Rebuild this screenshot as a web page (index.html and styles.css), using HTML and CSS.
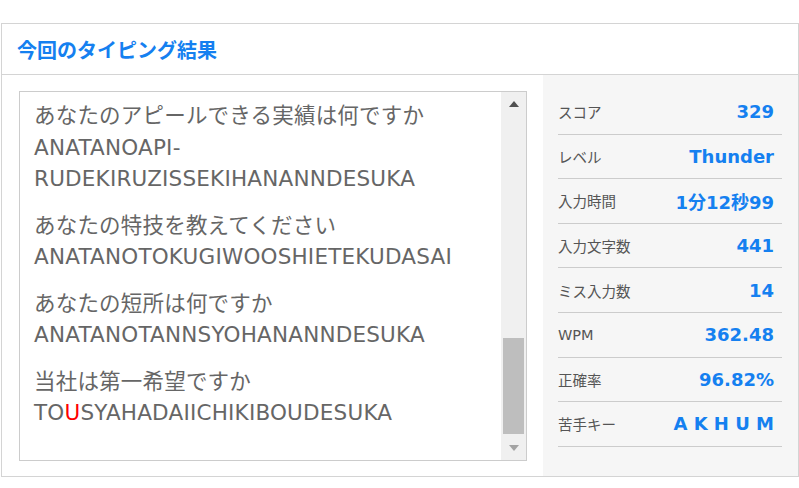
FILE: index.html
```html
<!DOCTYPE html>
<html lang="ja">
<head>
  <meta charset="UTF-8">
  <meta name="viewport" content="width=device-width, initial-scale=1.0">
  <title>タイピング結果</title>
  <link rel="stylesheet" href="styles.css">
</head>
<body>
  <div class="result-card">
    <div class="card-header">今回のタイピング結果</div>
    <div class="card-body">
      <div class="log-area">
        <div class="log-box">
          <div class="log-text">
            <div class="entry">
              <div>あなたのアピールできる実績は何ですか</div>
              <div>ANATANOAPI-RUDEKIRUZISSEKIHANANNDESUKA</div>
            </div>
            <div class="entry">
              <div>あなたの特技を教えてください</div>
              <div>ANATANOTOKUGIWOOSHIETEKUDASAI</div>
            </div>
            <div class="entry">
              <div>あなたの短所は何ですか</div>
              <div>ANATANOTANNSYOHANANNDESUKA</div>
            </div>
            <div class="entry">
              <div>当社は第一希望ですか</div>
              <div>TO<span class="miss">U</span>SYAHADAIICHIKIBOUDESUKA</div>
            </div>
          </div>
          <!-- fake scrollbar, scrolled to the bottom -->
          <div class="scrollbar">
            <div class="scroll-btn"><span class="arrow-up"></span></div>
            <div class="scroll-track"><div class="scroll-thumb"></div></div>
            <div class="scroll-btn"><span class="arrow-down"></span></div>
          </div>
        </div>
      </div>
      <div class="stats">
        <div class="stat-row"><span class="stat-label">スコア</span><span class="stat-value">329</span></div>
        <div class="stat-row"><span class="stat-label">レベル</span><span class="stat-value">Thunder</span></div>
        <div class="stat-row"><span class="stat-label">入力時間</span><span class="stat-value">1分12秒99</span></div>
        <div class="stat-row"><span class="stat-label">入力文字数</span><span class="stat-value">441</span></div>
        <div class="stat-row"><span class="stat-label">ミス入力数</span><span class="stat-value">14</span></div>
        <div class="stat-row"><span class="stat-label">WPM</span><span class="stat-value">362.48</span></div>
        <div class="stat-row"><span class="stat-label">正確率</span><span class="stat-value">96.82%</span></div>
        <div class="stat-row"><span class="stat-label">苦手キー</span><span class="stat-value">A K H U M</span></div>
      </div>
    </div>
  </div>
</body>
</html>
```

FILE: styles.css
```css
body {
  margin: 0;
  background-color: #fff;
  font-family: "DejaVu Sans", "Noto Sans CJK JP", sans-serif;
}

/* Card */
.result-card {
  width: 798px;
  margin: 23px 0 0 1px;
  border: 1px solid #d4d4d4;
  box-sizing: border-box;
}
.card-header {
  height: 51px;
  padding: 0 15px;
  border-bottom: 1px solid #d4d4d4;
  box-sizing: border-box;
  display: flex;
  align-items: center;
  color: #1580f0;
  font-size: 20px;
  font-weight: bold;
}
.card-body {
  display: flex;
  height: 401px;
}

/* Typed text log */
.log-area {
  flex: 1;
  padding: 16px 16px 15px 17px;
}
.log-box {
  height: 100%;
  border: 1px solid #cccccc;
  box-sizing: border-box;
  display: flex;
}
.log-text {
  flex: 1;
  padding: 8px 14px;
  overflow: hidden;
  color: #666;
  font-size: 21.5px;
  line-height: 31.5px;
  letter-spacing: 0.2px;
}
.entry + .entry {
  margin-top: 15px;
}
.miss {
  color: #ff0000;
}

/* Scrollbar */
.scrollbar {
  width: 25px;
  background-color: #f0f0f0;
  display: flex;
  flex-direction: column;
}
.scroll-btn {
  height: 24px;
  display: flex;
  align-items: center;
  justify-content: center;
}
.scroll-track {
  flex: 1;
  display: flex;
  flex-direction: column;
  justify-content: flex-end;
  padding: 0 2px 2px 2px;
}
.scroll-thumb {
  height: 96px;
  background-color: #bebebe;
}
.arrow-up {
  width: 0;
  height: 0;
  border-left: 5.5px solid transparent;
  border-right: 5.5px solid transparent;
  border-bottom: 6px solid #505050;
}
.arrow-down {
  width: 0;
  height: 0;
  border-left: 5.5px solid transparent;
  border-right: 5.5px solid transparent;
  border-top: 6px solid #a3a3a3;
}

/* Stats panel */
.stats {
  width: 255px;
  padding: 15px 16px 0 15px;
  box-sizing: border-box;
  background-color: #f6f6f6;
}
.stat-row {
  height: 44.6px;
  border-bottom: 1px solid #cccccc;
  box-sizing: border-box;
  display: flex;
  align-items: center;
  justify-content: space-between;
  padding-right: 8px;
}
.stat-label {
  color: #555;
  font-size: 14.5px;
}
.stat-value {
  color: #1580f0;
  font-size: 18px;
  font-weight: bold;
}
```
